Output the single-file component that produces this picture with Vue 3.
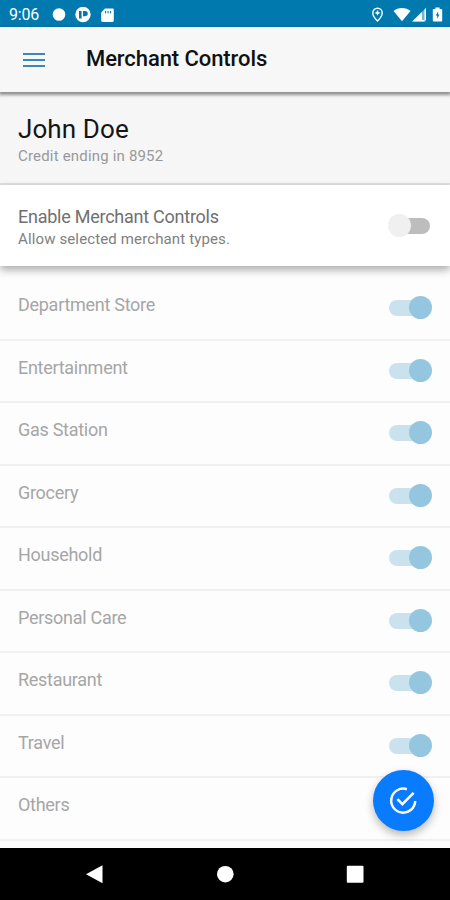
<script setup>
import { ref } from 'vue'

const enabled = ref(false)
const merchants = ref([
  { name: 'Department Store', on: true },
  { name: 'Entertainment', on: true },
  { name: 'Gas Station', on: true },
  { name: 'Grocery', on: true },
  { name: 'Household', on: true },
  { name: 'Personal Care', on: true },
  { name: 'Restaurant', on: true },
  { name: 'Travel', on: true },
  { name: 'Others', on: true },
])
</script>

<template>
  <div class="screen">
    <div class="status">
      <span class="time">9:06</span>
      <svg class="status-left" width="68" height="16" viewBox="0 0 68 16" fill="#fff">
        <circle cx="7" cy="7.500" r="6.300" />
        <circle cx="31" cy="7.500" r="7.700" />
        <path d="M27 4h2.600v7.400H27zM31 4h2.200a2.600 2.600 0 0 1 0 5.200H31z" fill="#0079ae" />
        <path d="M49.200 5.400 53 1.600h7.500c.8 0 1.300.5 1.300 1.300v10.700c0 .8-.5 1.300-1.300 1.300h-10c-.8 0-1.300-.5-1.300-1.300z" />
        <path d="M53 4h1.100v2.200H53zM55.500 4h1.100v2.200h-1.100zM58 4h1.100v2.200H58z" fill="#0079ae" />
      </svg>
      <svg class="status-right" width="72" height="16" viewBox="0 0 72 16" fill="#fff">
        <path d="M5.500 1.200a4.700 4.700 0 0 0-4.700 4.700c0 3.400 4.700 8 4.700 8s4.700-4.600 4.700-8a4.700 4.700 0 0 0-4.700-4.700z" fill="none" stroke="#fff" stroke-width="1.400" />
        <path d="M5.500 3l1 2 2 .9-2 .9-1 2-1-2-2-.9 2-.9z" />
        <path d="M30 1c3.300 0 6.200 1.200 8.500 3.100L30 14.300 21.500 4.100C23.800 2.200 26.700 1 30 1z" />
        <path d="M54 1v13.500H40.200z" opacity=".45" />
        <path d="M50 4.900v9.600h-9.800zM52.500 14.500H54V1l-1.500 1.500zM50 13h4v1.500h-4z" />
        <path d="M63.400 1.900V.5h4.200v1.400h1.600c.6 0 1 .4 1 1v10.700c0 .6-.4 1-1 1h-7.400c-.6 0-1-.4-1-1V2.900c0-.6.400-1 1-1z" />
        <path d="M66.100 4.300 63.800 8.600h1.400v3.200l2.300-4.200h-1.400z" fill="#0079ae" />
      </svg>
    </div>

    <header class="toolbar">
      <div class="menu"><i></i><i></i><i></i></div>
      <h1>Merchant Controls</h1>
    </header>

    <section class="profile">
      <h2>John Doe</h2>
      <p>Credit ending in 8952</p>
    </section>

    <section class="master">
      <div>
        <h3>Enable Merchant Controls</h3>
        <p>Allow selected merchant types.</p>
      </div>
      <button class="switch" :class="{ on: enabled }" aria-label="Enable" @click="enabled = !enabled"></button>
    </section>

    <ul class="list">
      <li v-for="m in merchants" :key="m.name">
        <span>{{ m.name }}</span>
        <button class="switch" :class="{ on: m.on }" :aria-label="m.name" disabled></button>
      </li>
    </ul>

    <button class="fab" aria-label="Save">
      <svg width="30" height="30" viewBox="0 0 30 30" fill="none" stroke="#fff" stroke-width="2.500">
        <path d="M17.800 3.200A12 12 0 1 0 26.200 15" />
        <path d="M8.400 13.200 13.400 18.200 24.600 6.800" />
      </svg>
    </button>

    <nav class="navbar">
      <svg width="450" height="52" viewBox="0 0 450 52" fill="#fff">
        <path d="M86 26.200 102.500 17.200v18z" />
        <circle cx="225.300" cy="26.200" r="8.300" />
        <rect x="346.800" y="17.700" width="16.700" height="17" rx="1" />
      </svg>
    </nav>
  </div>
</template>

<style>
body {
  margin: 0;
}
</style>

<style scoped>
.screen {
  position: relative;
  display: flex;
  flex-direction: column;
  width: 450px;
  height: 900px;
  overflow: hidden;
  background: #fdfdfd;
  font-family: Roboto, sans-serif;
}
h1, h2, h3, p, ul {
  margin: 0;
  padding: 0;
  font-weight: 400;
}
button {
  padding: 0;
  border: 0;
}
.status {
  display: flex;
  align-items: center;
  flex: none;
  box-sizing: border-box;
  height: 27px;
  padding: 2px 6px 0 9px;
  background: #0079ae;
  color: #fff;
}
.time {
  width: 43px;
  font-size: 16px;
  line-height: 20px;
  letter-spacing: -0.2px;
}
.status-right {
  margin-left: auto;
}
.toolbar {
  position: relative;
  z-index: 2;
  display: flex;
  align-items: center;
  flex: none;
  box-sizing: border-box;
  height: 65px;
  padding-left: 23px;
  background: #f7f7f7;
  box-shadow: 0 2px 3px 1px rgba(0, 0, 0, 0.42);
}
.menu {
  display: grid;
  gap: 4px;
  width: 22px;
  margin-right: 41px;
}
.menu i {
  height: 2px;
  background: #3b87b8;
}
h1 {
  margin-top: -1px;
  font-size: 22px;
  font-weight: 500;
  line-height: 28px;
  letter-spacing: -0.08px;
  color: #111;
}
.profile {
  flex: none;
  box-sizing: border-box;
  height: 93px;
  padding: 21px 18px 0;
  border-bottom: 2px solid #e0e0e0;
  background: #f6f6f6;
}
h2 {
  font-size: 26px;
  line-height: 32px;
  letter-spacing: 0.1px;
  color: #151515;
}
.profile p {
  margin-top: 1px;
  font-size: 15px;
  line-height: 20px;
  letter-spacing: 0.18px;
  color: #999;
}
.master {
  position: relative;
  z-index: 1;
  display: flex;
  justify-content: space-between;
  flex: none;
  box-sizing: border-box;
  height: 81px;
  padding: 20px 18px 0;
  background: #fff;
  box-shadow: 0 4px 8px rgba(0, 0, 0, 0.32);
}
h3 {
  font-size: 18px;
  line-height: 24px;
  letter-spacing: -0.25px;
  color: #707070;
}
.master p {
  font-size: 15px;
  line-height: 20px;
  letter-spacing: 0.13px;
  color: #808080;
}
.switch {
  position: relative;
  flex: none;
  width: 41px;
  height: 16px;
  border-radius: 8px;
  background: #bdbdbd;
}
.master .switch {
  margin: 13px 2px 0 0;
}
.switch::before {
  content: '';
  position: absolute;
  top: -4px;
  left: -1px;
  width: 23px;
  height: 23px;
  border-radius: 50%;
  background: #f0f0f0;
}
.switch.on {
  background: #cae2ed;
}
.switch.on::before {
  left: 20px;
  background: #94c7df;
}
.list {
  flex: 1;
  padding-top: 12px;
  list-style: none;
}
.list li {
  display: flex;
  align-items: center;
  justify-content: space-between;
  box-sizing: border-box;
  height: 62.5px;
  padding: 0 20px 0 18px;
  border-bottom: 2px solid #f1f1f1;
}
.list span {
  margin-top: -6px;
  font-size: 18px;
  line-height: 24px;
  letter-spacing: -0.28px;
  color: #a6a6a6;
}
.fab {
  position: absolute;
  z-index: 3;
  top: 770px;
  left: 373px;
  display: flex;
  align-items: center;
  justify-content: center;
  width: 61px;
  height: 61px;
  border-radius: 50%;
  background: #087bff;
  box-shadow: 0 4px 8px rgba(0, 0, 0, 0.28);
}
.navbar {
  z-index: 1;
  flex: none;
  height: 52px;
  background: #000;
}
.navbar svg {
  display: block;
}
</style>
